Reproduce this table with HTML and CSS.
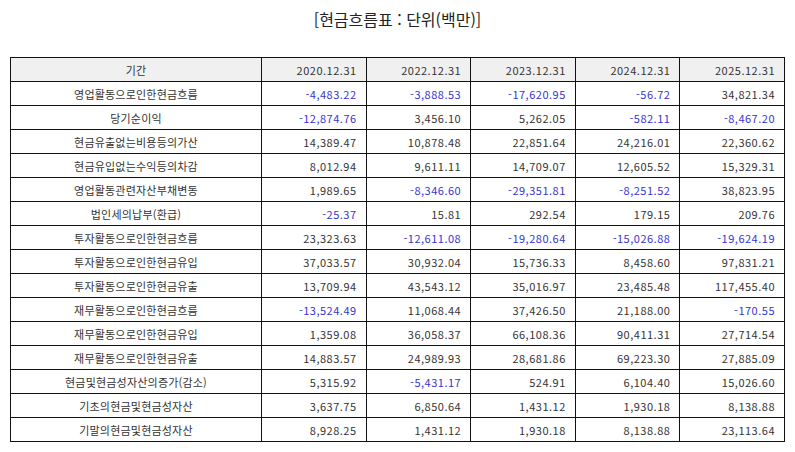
FILE: index.html
```html
<!DOCTYPE html>
<html lang="ko">
<head>
<meta charset="utf-8">
<link rel="stylesheet" href="styles.css">
</head>
<body>
<h1 class="title">[현금흐름표 : 단위(백만)]</h1>
<table class="cf">
<thead>
<tr><th class="label">기간</th><th>2020.12.31</th><th>2022.12.31</th><th>2023.12.31</th><th>2024.12.31</th><th>2025.12.31</th></tr>
</thead>
<tbody>
<tr><td class="label">영업활동으로인한현금흐름</td><td class="neg">-4,483.22</td><td class="neg">-3,888.53</td><td class="neg">-17,620.95</td><td class="neg">-56.72</td><td>34,821.34</td></tr>
<tr><td class="label">당기순이익</td><td class="neg">-12,874.76</td><td>3,456.10</td><td>5,262.05</td><td class="neg">-582.11</td><td class="neg">-8,467.20</td></tr>
<tr><td class="label">현금유출없는비용등의가산</td><td>14,389.47</td><td>10,878.48</td><td>22,851.64</td><td>24,216.01</td><td>22,360.62</td></tr>
<tr><td class="label">현금유입없는수익등의차감</td><td>8,012.94</td><td>9,611.11</td><td>14,709.07</td><td>12,605.52</td><td>15,329.31</td></tr>
<tr><td class="label">영업활동관련자산부채변동</td><td>1,989.65</td><td class="neg">-8,346.60</td><td class="neg">-29,351.81</td><td class="neg">-8,251.52</td><td>38,823.95</td></tr>
<tr><td class="label">법인세의납부(환급)</td><td class="neg">-25.37</td><td>15.81</td><td>292.54</td><td>179.15</td><td>209.76</td></tr>
<tr><td class="label">투자활동으로인한현금흐름</td><td>23,323.63</td><td class="neg">-12,611.08</td><td class="neg">-19,280.64</td><td class="neg">-15,026.88</td><td class="neg">-19,624.19</td></tr>
<tr><td class="label">투자활동으로인한현금유입</td><td>37,033.57</td><td>30,932.04</td><td>15,736.33</td><td>8,458.60</td><td>97,831.21</td></tr>
<tr><td class="label">투자활동으로인한현금유출</td><td>13,709.94</td><td>43,543.12</td><td>35,016.97</td><td>23,485.48</td><td>117,455.40</td></tr>
<tr><td class="label">재무활동으로인한현금흐름</td><td class="neg">-13,524.49</td><td>11,068.44</td><td>37,426.50</td><td>21,188.00</td><td class="neg">-170.55</td></tr>
<tr><td class="label">재무활동으로인한현금유입</td><td>1,359.08</td><td>36,058.37</td><td>66,108.36</td><td>90,411.31</td><td>27,714.54</td></tr>
<tr><td class="label">재무활동으로인한현금유출</td><td>14,883.57</td><td>24,989.93</td><td>28,681.86</td><td>69,223.30</td><td>27,885.09</td></tr>
<tr><td class="label">현금및현금성자산의증가(감소)</td><td>5,315.92</td><td class="neg">-5,431.17</td><td>524.91</td><td>6,104.40</td><td>15,026.60</td></tr>
<tr><td class="label">기초의현금및현금성자산</td><td>3,637.75</td><td>6,850.64</td><td>1,431.12</td><td>1,930.18</td><td>8,138.88</td></tr>
<tr><td class="label">기말의현금및현금성자산</td><td>8,928.25</td><td>1,431.12</td><td>1,930.18</td><td>8,138.88</td><td>23,113.64</td></tr>
</tbody>
</table>
</body>
</html>
```
FILE: styles.css
```css
html, body {
  margin: 0;
  padding: 0;
  background: #ffffff;
}
body {
  padding: 9px 10px 0 10px;
  font-family: "Noto Sans CJK KR", "Noto Sans", sans-serif;
  color: #333333;
}
.title {
  margin: 0;
  height: 48px;
  font-size: 16px;
  font-weight: normal;
  line-height: 20px;
  text-align: center;
  color: #222222;
}
.cf {
  width: 775px;
  border-collapse: collapse;
  table-layout: fixed;
  font-size: 11px;
}
.cf th, .cf td {
  border: 1px solid #111111;
  height: 23px;
  padding: 0 9px 0 6px;
  text-align: right;
  font-weight: normal;
  white-space: nowrap;
  line-height: 14px;
  letter-spacing: 0.5px;
}
.cf th {
  background: #f0f0f0;
}
.cf .label {
  width: 250px;
  text-align: center;
  padding: 0;
  letter-spacing: 0.2px;
}
.cf .neg {
  color: #3434d2;
}
```
